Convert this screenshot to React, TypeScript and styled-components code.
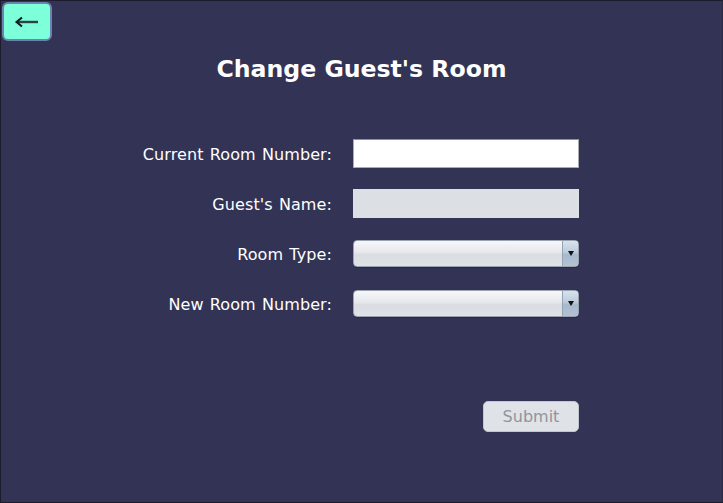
import React from "react";
import styled, { createGlobalStyle } from "styled-components";

const Global = createGlobalStyle`
  html, body { margin: 0; padding: 0; background: #333355; }
  * { box-sizing: border-box; }
`;

const Window = styled.div`
  width: 723px;
  height: 503px;
  background: #333355;
  border: 1px solid #1c1c2c;
  border-right-color: #2a2a44;
  display: flex;
  flex-direction: column;
  font-family: "DejaVu Sans", Verdana, sans-serif;
  position: relative;
`;

const TopBar = styled.div`
  height: 40px;
  padding: 1px 0 0 1px;
  display: flex;
  align-items: flex-start;
`;

const BackButton = styled.button`
  width: 50px;
  height: 39px;
  border: 2px solid #6a84b0;
  border-radius: 6px;
  background: #7dffd9;
  padding: 0;
  display: flex;
  align-items: center;
  justify-content: center;
  cursor: pointer;
`;

const Title = styled.h1`
  margin: 14px 0 0 0;
  text-align: center;
  color: #ffffff;
  font-family: "DejaVu Sans", Verdana, sans-serif;
  font-weight: bold;
  font-size: 23.6px;
  line-height: 28px;
`;

const Form = styled.div`
  margin-top: 45px;
  padding-left: 132px;
  display: grid;
  grid-template-columns: 199px 226px;
  column-gap: 21px;
  grid-auto-rows: 50px;
  align-items: center;
`;

const Label = styled.label`
  text-align: right;
  color: #ffffff;
  font-size: 16px;
  letter-spacing: 0.1px;
  word-spacing: 1px;
  padding-top: 3px;
`;

const TextField = styled.div<{ $disabled?: boolean }>`
  height: 29px;
  background: ${(p) => (p.$disabled ? "#dcdfe4" : "#ffffff")};
  border: 1px solid ${(p) => (p.$disabled ? "#dcdfe4" : "#a9abaf")};
  border-top-color: ${(p) => (p.$disabled ? "#dcdfe4" : "#8e9096")};
`;

const Combo = styled.div`
  height: 27px;
  margin-top: 1px;
  border: 1px solid #9aa3ae;
  border-radius: 4px;
  display: flex;
  overflow: hidden;
  background: linear-gradient(#f6f7f9 0%, #e6e8ec 45%, #d9dce1 55%, #dfe2e6 100%);
  box-shadow: 0 1px 0 #2a2a44;
`;

const ComboBody = styled.div`
  flex: 1;
`;

const ComboArrow = styled.div`
  width: 16px;
  border-left: 1px solid #95a4b5;
  background: linear-gradient(#d8e2ec 0%, #bccbdb 45%, #a6b8cb 55%, #b2c3d5 100%);
  display: flex;
  align-items: center;
  justify-content: center;
  &::after {
    content: "";
    width: 0;
    height: 0;
    border-left: 3.5px solid transparent;
    border-right: 3.5px solid transparent;
    border-top: 5px solid #111;
  }
`;

const Footer = styled.div`
  margin-top: 73px;
  padding-left: 482px;
`;

const SubmitButton = styled.button`
  width: 96px;
  height: 31px;
  border: 1px solid #c2c7ce;
  border-radius: 5px;
  background: #dfe2e7;
  color: #8f959d;
  font-family: "DejaVu Sans", Verdana, sans-serif;
  font-size: 16px;
  padding: 0;
`;

function ArrowIcon() {
  return (
    <svg width="30" height="14" viewBox="0 0 30 14">
      <line x1="6" y1="7" x2="26" y2="7" stroke="#2a4444" strokeWidth="2.4" />
      <path d="M10 2.5 L4.5 7 L10 11.5" fill="none" stroke="#0e1820" strokeWidth="2" />
    </svg>
  );
}

const rows: { label: string; kind: "text" | "disabled" | "combo" }[] = [
  { label: "Current Room Number:", kind: "text" },
  { label: "Guest's Name:", kind: "disabled" },
  { label: "Room Type:", kind: "combo" },
  { label: "New Room Number:", kind: "combo" },
];

export default function App() {
  return (
    <>
      <Global />
      <Window>
        <TopBar>
          <BackButton aria-label="Back">
            <ArrowIcon />
          </BackButton>
        </TopBar>
        <Title>Change Guest's Room</Title>
        <Form>
          {rows.map((r) => (
            <React.Fragment key={r.label}>
              <Label>{r.label}</Label>
              {r.kind === "combo" ? (
                <Combo>
                  <ComboBody />
                  <ComboArrow />
                </Combo>
              ) : (
                <TextField $disabled={r.kind === "disabled"} />
              )}
            </React.Fragment>
          ))}
        </Form>
        <Footer>
          <SubmitButton disabled>Submit</SubmitButton>
        </Footer>
      </Window>
    </>
  );
}
